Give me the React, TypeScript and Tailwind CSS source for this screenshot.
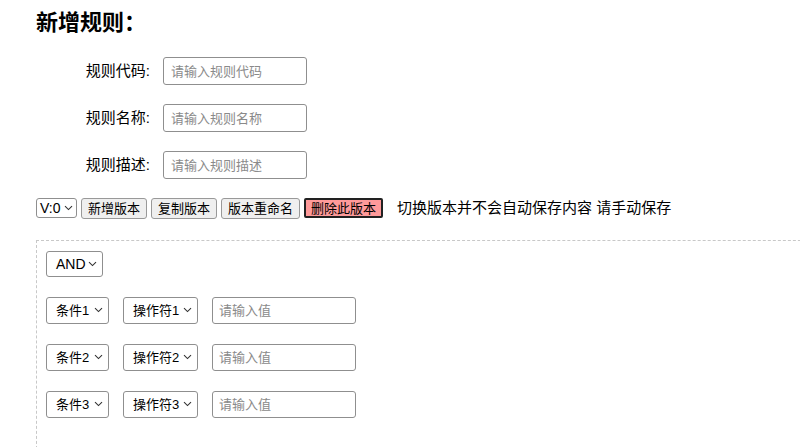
import React from "react";

const font = "font-['Liberation_Sans','Noto_Sans_CJK_SC',sans-serif]";

function Chevron() {
  return (
    <svg width="9" height="6" viewBox="0 0 9 6" className="shrink-0">
      <path d="M1 1.2 L4.5 4.6 L8 1.2" fill="none" stroke="#333" strokeWidth="1.1" />
    </svg>
  );
}

function FakeSelect({ label, w, h, text, gap }: { label: string; w: string; h: string; text: string; gap: string }) {
  return (
    <div className={`flex items-center justify-between whitespace-nowrap bg-white border border-[#8f8f8f] rounded-[3px] text-black ${w} ${h} ${text} ${gap}`}>
      <span className="leading-none">{label}</span>
      <Chevron />
    </div>
  );
}

function Field({ label, placeholder }: { label: string; placeholder: string }) {
  return (
    <div className="flex items-center">
      <div className="w-[114px] text-right text-[15px] text-black">{label}</div>
      <input
        placeholder={placeholder}
        className="ml-[13px] w-[144px] h-[28px] border border-[#8f8f8f] rounded-[3px] px-[7px] text-[13px] placeholder:text-[#8a8a8a] outline-none"
      />
    </div>
  );
}

function Btn({ children, danger }: { children: React.ReactNode; danger?: boolean }) {
  return (
    <button
      className={
        danger
          ? "h-[20px] px-[5px] text-[13px] leading-none bg-[#ff9a9a] border-2 border-[#222] rounded-[2px] text-black"
          : "h-[21px] px-[6px] text-[13px] leading-none bg-[#efefef] border border-[#999] rounded-[3px] text-black whitespace-nowrap"
      }
    >
      {children}
    </button>
  );
}

function CondRow({ n }: { n: number }) {
  return (
    <div className="flex items-center">
      <FakeSelect label={`条件${n}`} w="w-[63px]" h="h-[27px]" text="text-[13px]" gap="pl-[9px] pr-[5px]" />
      <div className="w-[14px]" />
      <FakeSelect label={`操作符${n}`} w="w-[75px]" h="h-[27px]" text="text-[13px]" gap="pl-[9px] pr-[5px]" />
      <div className="w-[14px]" />
      <input
        placeholder="请输入值"
        className="w-[144px] h-[27px] border border-[#8f8f8f] rounded-[3px] px-[6px] text-[13px] placeholder:text-[#8a8a8a] outline-none"
      />
    </div>
  );
}

export default function App() {
  return (
    <div className={`${font} w-[800px] h-[447px] overflow-hidden bg-white pl-[36px]`}>
      <h2 className="pt-[9px] text-[22px] font-bold leading-[28px] text-black">新增规则：</h2>
      <div className="mt-[20px] flex flex-col gap-[19px]">
        <Field label="规则代码:" placeholder="请输入规则代码" />
        <Field label="规则名称:" placeholder="请输入规则名称" />
        <Field label="规则描述:" placeholder="请输入规则描述" />
      </div>
      <div className="mt-[18px] flex items-center gap-[4px]">
        <FakeSelect label="V:0" w="w-[41px]" h="h-[20px]" text="text-[14px]" gap="pl-[3px] pr-[3px]" />
        <Btn>新增版本</Btn>
        <Btn>复制版本</Btn>
        <Btn>版本重命名</Btn>
        <Btn danger>删除此版本</Btn>
        <span className="ml-[10px] text-[15px] text-black">切换版本并不会自动保存内容 请手动保存</span>
      </div>
      <div className="mt-[20px] w-[800px] border border-dashed border-[#c8c8c8] pt-[10px] pl-[9px] pb-[40px]">
        <FakeSelect label="AND" w="w-[57px]" h="h-[26px]" text="text-[14px]" gap="pl-[9px] pr-[5px]" />
        <div className="mt-[20px] flex flex-col gap-[20px]">
          <CondRow n={1} />
          <CondRow n={2} />
          <CondRow n={3} />
        </div>
      </div>
    </div>
  );
}
